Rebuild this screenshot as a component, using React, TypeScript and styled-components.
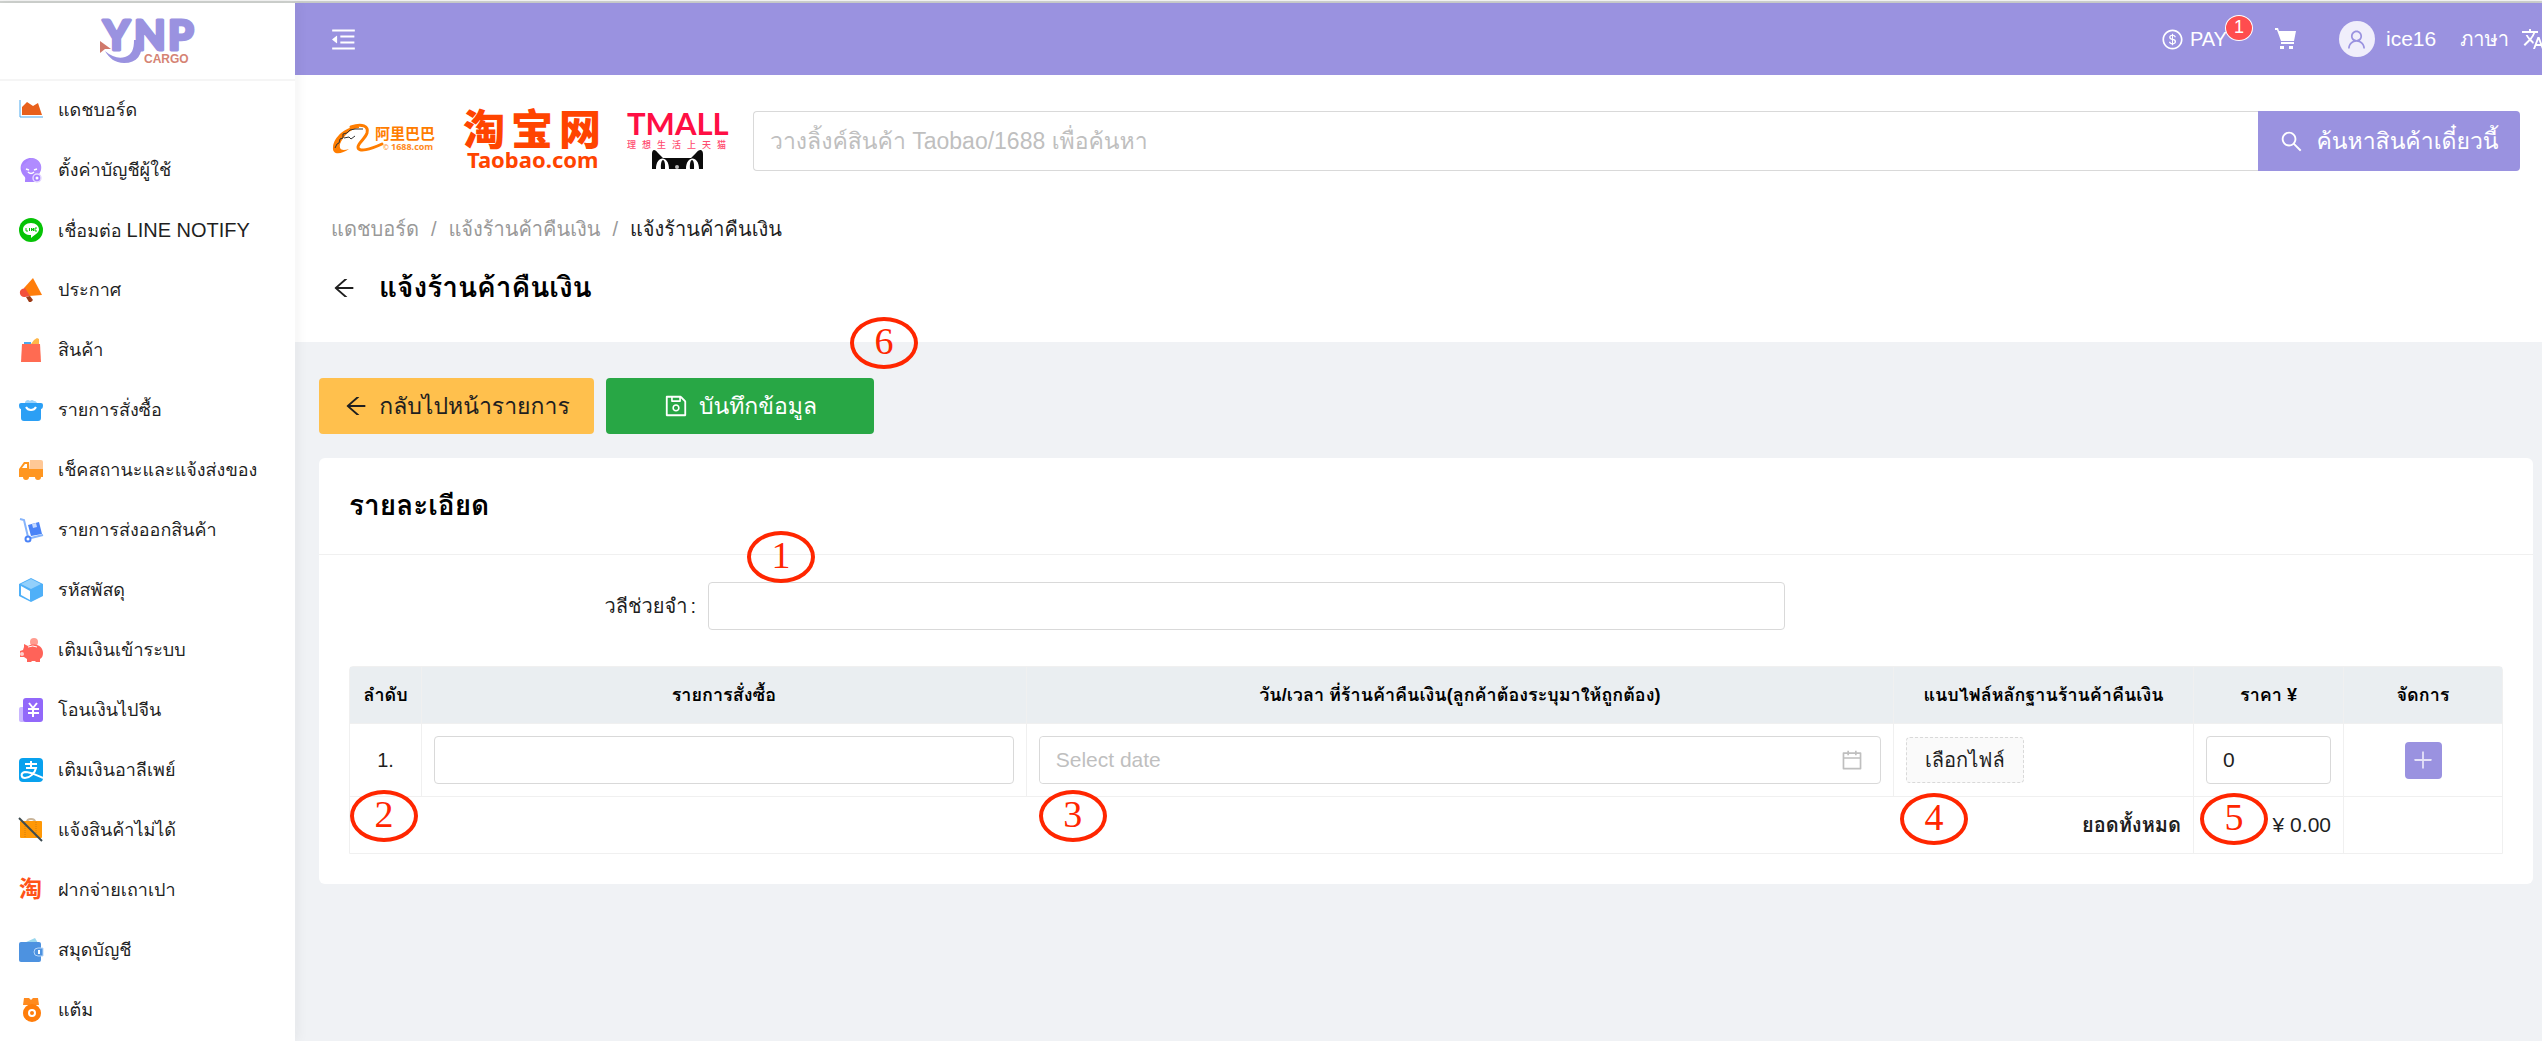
import React from "react";
import styled, { createGlobalStyle, css } from "styled-components";
import {
  AiOutlineArrowLeft,
  AiOutlineCalendar,
  AiOutlineDollarCircle,
  AiOutlineMenuFold,
  AiOutlinePlus,
  AiOutlineSave,
  AiOutlineSearch,
  AiOutlineUser,
} from "react-icons/ai";
import { MdTranslate } from "react-icons/md";

const purple = "#9a92e0";
const line = "#f0f0f0";
const fieldLine = "#d9d9d9";
const ink = "#1f1f1f";
const sans = '"Liberation Sans", "Loma", "Noto Sans Thai", sans-serif';

const GlobalStyle = createGlobalStyle`
  *, *::before, *::after { box-sizing: border-box; }
  body {
    margin: 0;
    background: #f0f2f5;
    color: ${ink};
    font-family: ${sans};
    font-size: 20px;
    line-height: 32px;
  }
  button, input { font: inherit; color: inherit; }
  a { color: inherit; text-decoration: none; }
  h1, h2, ol, ul { margin: 0; padding: 0; list-style: none; }
`;

/* ---------- shell ---------- */

const Page = styled.div`
  display: flex;
  flex-direction: column;
  min-height: 100vh;
  overflow: hidden;
`;

const TopEdge = styled.div`
  flex: none;
  height: 3px;
  background: #cfd2cf;
  border-top: 1px solid #f4f4f4;
`;

const Shell = styled.div`
  display: flex;
  flex: 1;
`;

const Sidebar = styled.aside`
  flex: none;
  width: 295px;
  background: #fff;
  box-shadow: 2px 0 12px rgba(29, 35, 41, 0.06);
  z-index: 1;
`;

const Brand = styled.a`
  display: flex;
  justify-content: center;
  align-items: center;
  height: 78px;
  border-bottom: 2px solid #f5f5f5;

  svg { overflow: visible; }
`;

const MenuLink = styled.a`
  display: flex;
  align-items: center;
  gap: 15px;
  height: 60px;
  padding: 0 19px 2px;
  font-size: 18px;
  white-space: nowrap;

  svg { flex: none; overflow: visible; }
`;

const Latin = styled.span`
  font-size: 20px;
`;

const Main = styled.div`
  flex: 1;
  min-width: 0;
`;

/* ---------- header ---------- */

const TopBar = styled.header`
  display: flex;
  justify-content: space-between;
  align-items: center;
  height: 72px;
  padding-left: 34px;
  background: ${purple};
  color: #fff;
  box-shadow: 0 1px 6px rgba(0, 21, 41, 0.12);
`;

const BarButton = styled.button`
  display: flex;
  padding: 0;
  border: 0;
  background: none;
  color: #fff;
`;

const BarGroup = styled.div`
  display: flex;
  align-items: center;
`;

const PayLink = styled.a`
  display: flex;
  align-items: center;
  gap: 6px;
  position: relative;
  margin-right: 48px;
`;

const PayCount = styled.span`
  position: absolute;
  left: 64px;
  top: -8px;
  width: 28px;
  height: 26px;
  border: 1px solid #fff;
  border-radius: 50%;
  background: #ff4d4f;
  font-size: 18px;
  line-height: 23px;
  text-align: center;
`;

const Avatar = styled.span`
  display: flex;
  justify-content: center;
  align-items: center;
  width: 36px;
  height: 36px;
  border-radius: 50%;
  background: #f0eefb;
  color: ${purple};
`;

const UserLink = styled.a`
  display: flex;
  align-items: center;
  gap: 11px;
  margin: 0 24px 0 42px;
  font-size: 21px;
`;

const LanguageButton = styled(BarButton)`
  align-items: center;
  gap: 12px;
`;

const IconClip = styled.span`
  display: flex;
  width: 21px;
  overflow: hidden;

  svg { flex: none; }
`;

/* ---------- page heading ---------- */

const Intro = styled.div`
  padding: 36px 22px 30px 36px;
  background: #fff;
`;

const SearchRow = styled.form`
  display: flex;
  align-items: center;
`;

const Shops = styled.div`
  display: flex;
  align-items: center;
  gap: 26px;
  margin-right: 24px;

  svg { display: block; overflow: visible; }
`;

const SearchInput = styled.input`
  flex: 1;
  min-width: 0;
  height: 60px;
  padding: 0 16px;
  border: 1px solid ${fieldLine};
  border-right: 0;
  border-radius: 4px 0 0 4px;
  outline: 0;
  background: #fff;
  font-size: 23px;

  &::placeholder { color: #bfbfbf; opacity: 1; }
`;

const SearchButton = styled.button`
  display: flex;
  justify-content: center;
  align-items: center;
  gap: 12px;
  width: 262px;
  height: 60px;
  padding: 0;
  border: 0;
  border-radius: 0 4px 4px 0;
  background: ${purple};
  color: #fff;
  font-size: 23px;
`;

const Crumbs = styled.ol`
  display: flex;
  margin-top: 42px;
  color: #999;
`;

const Crumb = styled.li`
  &:last-child { color: ${ink}; }

  & + &::before {
    content: "/";
    padding: 0 12px;
    color: #999;
  }
`;

const TitleRow = styled.div`
  display: flex;
  align-items: center;
  gap: 22px;
  height: 48px;
  margin-top: 19px;
`;

const PlainButton = styled.button`
  display: flex;
  padding: 0;
  border: 0;
  background: none;
`;

const PageTitle = styled.h1`
  color: #000;
  font-size: 28px;
  line-height: 48px;
`;

/* ---------- body ---------- */

const Content = styled.main`
  padding: 36px 9px 24px 24px;
`;

const Actions = styled.div`
  position: relative;
  display: flex;
  gap: 12px;
`;

const ActionButton = styled.button<{ $tone: "amber" | "green" }>`
  display: flex;
  justify-content: center;
  align-items: center;
  gap: 10px;
  height: 56px;
  border: 0;
  border-radius: 4px;
  font-size: 23px;

  ${({ $tone }) =>
    $tone === "amber"
      ? css`
          width: 275px;
          background: #ffc04d;
        `
      : css`
          width: 268px;
          background: #28a745;
          color: #fff;
        `}
`;

const Card = styled.section`
  margin-top: 24px;
  border-radius: 6px;
  background: #fff;
`;

const CardTitle = styled.h2`
  height: 97px;
  padding: 0 30px;
  border-bottom: 1px solid ${line};
  color: #000;
  font-size: 28px;
  line-height: 96px;
`;

const CardBody = styled.div`
  padding: 27px 30px 30px;
`;

const FieldRow = styled.div`
  position: relative;
  display: grid;
  grid-template-columns: 4fr 12fr 8fr;
  align-items: center;
`;

const FieldLabel = styled.label`
  padding-right: 12px;
  text-align: right;

  &::after {
    content: ":";
    margin-left: 3px;
  }
`;

const TextInput = styled.input`
  display: block;
  width: 100%;
  height: 48px;
  padding: 0 16px;
  border: 1px solid ${fieldLine};
  border-radius: 4px;
  outline: 0;
  background: #fff;
  font-size: 21px;

  &::placeholder { color: #bfbfbf; opacity: 1; }
`;

const DateField = styled.div`
  display: flex;
  align-items: center;
  height: 48px;
  padding-right: 16px;
  border: 1px solid ${fieldLine};
  border-radius: 4px;
  color: #bfbfbf;

  ${TextInput} { height: 46px; border: 0; }
  svg { flex: none; }
`;

const Table = styled.table`
  width: 100%;
  margin-top: 36px;
  border: 1px solid ${line};
  border-radius: 4px 4px 0 0;
  border-collapse: separate;
  border-spacing: 0;
  table-layout: fixed;
`;

const HeadCell = styled.th`
  height: 56px;
  padding: 0;
  background: #eaeef1;
  color: #000;
  font-size: 18px;
  white-space: nowrap;

  & + & { border-left: 1px solid ${line}; }
`;

const Cell = styled.td<{ $align?: "left" | "center" | "right"; $short?: boolean }>`
  position: relative;
  height: ${({ $short }) => ($short ? 57 : 73)}px;
  padding: 0 12px;
  border-top: 1px solid ${line};
  text-align: ${({ $align = "left" }) => $align};
  vertical-align: middle;

  & + & { border-left: 1px solid ${line}; }
`;

const Amount = styled.span`
  font-size: 21px;
`;

const FileButton = styled.button`
  height: 46px;
  padding: 0 18px;
  border: 1px dashed ${fieldLine};
  border-radius: 4px;
  background: #fafafa;
`;

const AddButton = styled.button`
  display: inline-flex;
  justify-content: center;
  align-items: center;
  width: 37px;
  height: 37px;
  padding: 0;
  border: 0;
  border-radius: 4px;
  background: ${purple};
  color: #e6e3f8;
  vertical-align: middle;
`;

/* Numbered callout that lies over the form. */
const Marker = styled.span<{ $left: string; $top: string }>`
  position: absolute;
  left: ${({ $left }) => $left};
  top: ${({ $top }) => $top};
  z-index: 1;
  width: 68px;
  height: 52px;
  border: 4px solid #ff2600;
  border-radius: 50%;
  color: #ff2600;
  font-family: "Liberation Serif", serif;
  font-size: 38px;
  line-height: 40px;
  text-align: center;
`;

/* ---------- drawings ---------- */

const cjk = '"Noto Sans CJK SC", sans-serif';

const YnpLogo = () => (
  <svg width="98" height="50" viewBox="0 0 98 50" role="img" aria-label="YNP Cargo">
    <g fill={purple} stroke={purple} strokeWidth="3" strokeLinejoin="round" fontFamily="Lato, sans-serif" fontWeight="900" fontSize="41">
      <text x="4" y="34">Y</text>
      <text x="35" y="34">N</text>
      <text x="69" y="34">P</text>
    </g>
    <path d="M43 24c1 15-5 23-18 23-9 0-15-5-19-12 7 6 14 8 20 6 7-2 9-8 9-17z" fill={purple} />
    <path d="M10 36c9 6 19 4 23-5" fill="none" stroke="#fff" strokeWidth="1" />
    <path d="M1 25l11 8-6 0-5 4z" fill="#d0796b" />
    <text x="45" y="47" fill="#d58373" fontFamily='"Liberation Sans", sans-serif' fontWeight="700" fontSize="12">CARGO</text>
  </svg>
);

const AlibabaLogo = () => (
  <svg width="104" height="34" viewBox="0 0 104 34" role="img" aria-label="阿里巴巴 1688.com">
    <path d="M28 3C17 1 3 12 2 23c-1 9 9 7 16 2-7 2-10 1-9-5C12 13 18 5 28 4z" fill="#ff7d00" />
    <path d="M20 3c11-4 18-1 16 6-2 6-9 10-9 14 0 6 13 2 24-3" fill="none" stroke="#ff7d00" strokeWidth="3" strokeLinecap="round" />
    <path d="M4 24l2-4 2-1 1-4 3-1 0-4 4-1 3-3 5-1 8 0" fill="none" stroke="#333" strokeWidth="1" />
    <path d="M13 14l5-1 2 2 4-3" fill="none" stroke="#333" strokeWidth="1" />
    <text x="44" y="15" fill="#ff7d00" fontFamily={cjk} fontWeight="700" fontSize="15">阿里巴巴</text>
    <text x="52" y="26" fill="#ff9630" fontFamily='"Open Sans", sans-serif' fontWeight="700" fontSize="7">©</text>
    <text x="60" y="26" fill="#ff8a1c" fontFamily='"Open Sans", sans-serif' fontWeight="700" fontSize="9">1688.com</text>
  </svg>
);

const TaobaoLogo = () => (
  <svg width="140" height="60" viewBox="0 0 140 60" role="img" aria-label="淘宝网 Taobao.com">
    <g fill="#ff4400">
      <text x="2" y="34" fontFamily={cjk} fontWeight="900" fontSize="42">淘</text>
      <text x="50" y="34" fontFamily={cjk} fontWeight="900" fontSize="42">宝</text>
      <text x="98" y="34" fontFamily={cjk} fontWeight="900" fontSize="42">网</text>
      <text x="6" y="57" fontFamily='"Noto Sans", sans-serif' fontWeight="700" fontSize="22">Taobao.com</text>
    </g>
  </svg>
);

const TmallLogo = () => (
  <svg width="102" height="60" viewBox="0 0 102 60" role="img" aria-label="TMALL 理想生活上天猫">
    <text x="0" y="24" fill="#ff0f44" fontFamily="Lato, sans-serif" fontWeight="700" fontSize="31">TMALL</text>
    <g fill="#ff4a70" fontFamily={cjk} fontSize="9" fontWeight="500">
      {["理", "想", "生", "活", "上", "天", "猫"].map((c, i) => (
        <text key={c} x={i * 15} y="37">{c}</text>
      ))}
    </g>
    <path d="M25 58V43c0-5 3-5 6-1l5 5h28l5-5c3-4 7-4 7 1v15z" fill="#0b0b0b" />
    <path d="M29 58c0-14 13-14 13 0zM59 58c0-14 13-14 13 0z" fill="#fff" />
    <path d="M34 58c-1-12 5-12 4 0zM63 58c-1-12 5-12 4 0z" fill="#0b0b0b" />
    <circle cx="50" cy="56" r="2" fill="#bbb" />
  </svg>
);

const CartIcon = () => (
  <svg width="22" height="22" viewBox="0 0 22 22" fill="#fff" aria-hidden="true">
    <path d="M0 0h3l1 3h17l-2 10H6L2 2H0zM6 14h13v2H6zM5 18h4v3H5zM14 18h4v3h-4z" />
  </svg>
);

const glyphs: Record<string, React.ReactNode> = {
  chart: (
    <>
      <path d="M1 2v17h23" fill="none" stroke="#4aa8ee" strokeWidth="1" />
      <path d="M3 17V9l5-5 6 4 5-3 4 12z" fill="#e8601c" />
    </>
  ),
  user: (
    <>
      <path d="M6 24c0-3 1-4-1-6C-2 10 3 0 12 0s14 10 7 17c-2 2-2 4-1 7z" fill="#a982ff" />
      <path d="M2 9L12 0c8 0 13 8 8 16L8 15z" fill="#b793ff" opacity=".5" />
      <path d="M7 11l3 1m5 0l3-1M9 14q3 3 6 0" stroke="#fff" strokeWidth="1.5" fill="none" />
      <circle cx="18" cy="20" r="4" fill="#a982ff" stroke="#e5d9ff" strokeWidth="1.5" />
      <circle cx="18" cy="20" r="1.5" fill="#fff" />
    </>
  ),
  chat: (
    <>
      <circle cx="12" cy="12" r="12" fill="#06c306" />
      <path d="M12 5c5 0 8 3 8 6.500S14 18 12 20v-3c-5 0-8-2-8-5.500S7 5 12 5z" fill="#fff" />
      <path d="M7 10v3h2M10.500 10v3M12.500 13v-3l2 3v-3M18 10h-2v3h2" stroke="#06c306" strokeWidth="1" fill="none" />
    </>
  ),
  horn: (
    <>
      <path d="M14 0l9 17-13 1-5-8z" fill="#ff7d0a" />
      <path d="M6 10l5 8-5 1c-5 1-7-6-3-8z" fill="#f2503b" />
      <path d="M7 19l4-1 3 4-2 2-2 0z" fill="#9c3b17" />
    </>
  ),
  bag: (
    <>
      <path d="M5 6V4h7v3z" fill="#4aa8ee" />
      <path d="M12 6l3-4 3-2 2 1v6z" fill="#ffb648" />
      <path d="M3 6h18l1 18H2z" fill="#ff6b52" />
    </>
  ),
  box: (
    <>
      <path d="M6 6a3 3 0 015-3 3 3 0 014 0 3 3 0 013 4z" fill="#9cd3fb" />
      <path d="M2 5h20a2 2 0 012 2c0 3-1 4-2 4v9c0 2-1 3-3 3H5c-2 0-3-1-3-3v-9C1 11 0 10 0 7a2 2 0 012-2z" fill="#2b9ff5" />
      <path d="M7 9c2 4 8 4 10 0" stroke="#fff" strokeWidth="2" fill="none" />
    </>
  ),
  truck: (
    <>
      <path d="M11 2h11a2 2 0 012 2v8H10z" fill="#ffc896" />
      <path d="M10 4H5L0 11v8h4a3 3 0 006 0h6a3 3 0 006 0h2v-8H10z" fill="#ff9620" />
      <path d="M8 6v4H3l3-4z" fill="#fff" />
    </>
  ),
  trolley: (
    <>
      <path d="M1 1l4 1 4 17" stroke="#86b4fb" strokeWidth="2" fill="none" />
      <path d="M9 7l11-3 3 12-11 2z" fill="#4a83f7" />
      <path d="M13 6l4-1 1 4-4 1z" fill="#c5d9ff" />
      <path d="M12 20l12-3" stroke="#86b4fb" strokeWidth="2" />
      <circle cx="9" cy="21" r="2.500" fill="#fff" stroke="#4a83f7" strokeWidth="2" />
    </>
  ),
  cube: (
    <>
      <path d="M12 0l12 6v12l-12 6L0 18V6z" fill="#4fb0f8" />
      <path d="M12 1l10 5-10 5L2 6z" fill="#93d0fb" />
      <path d="M2 8l9 5v9l-9-5z" fill="#fff" />
    </>
  ),
  piggy: (
    <>
      <circle cx="15" cy="4" r="4" fill="#ff9c90" />
      <path d="M5 6l4 2c9-4 15 1 15 7 0 3-1 5-3 6v3h-4l-1-1h-3l-1 1H8v-3l-3-2H1v-6l3-1 1-3z" fill="#ff6359" />
      <path d="M9 9q5-2 9 0" stroke="#fff" strokeWidth="1" fill="none" />
      <circle cx="3" cy="16" r="2" fill="#fff" opacity=".7" />
    </>
  ),
  yuan: (
    <>
      <rect x="0" y="9" width="10" height="15" rx="2" fill="#c9b6ff" />
      <rect x="4" y="0" width="20" height="24" rx="3" fill="#9268fa" />
      <path d="M10 5l4 5 4-5M14 10v9M9 11h11M9 15h11" stroke="#fff" strokeWidth="2" fill="none" />
    </>
  ),
  alipay: (
    <>
      <rect width="24" height="24" rx="4" fill="#08a1ee" />
      <path d="M6 6h12M12 3v7M7 10h10c-1 5-6 10-11 10-4 0-5-5 0-6 6 0 11 3 18 6" stroke="#fff" strokeWidth="2" fill="none" />
    </>
  ),
  suitcase: (
    <>
      <path d="M8 4q0-3 4-3t4 3" stroke="#c9b59a" strokeWidth="2" fill="none" />
      <rect x="1" y="3" width="22" height="17" rx="1" fill="#ff9806" />
      <path d="M6 4v15M17 4v15" stroke="#d07f12" strokeWidth="1" strokeDasharray="1 1" />
      <path d="M0 0l23 23" stroke="#3c4a50" strokeWidth="2" />
    </>
  ),
  taobao: (
    <text x="0" y="19" fill="#ff5318" fontFamily={cjk} fontWeight="700" fontSize="23">淘</text>
  ),
  wallet: (
    <>
      <path d="M5 5l11-5 3 5z" fill="#9bd7ee" />
      <rect x="0" y="4" width="22" height="20" rx="2" fill="#4d92e0" />
      <path d="M24 10h-5a4 4 0 000 8h5z" fill="#4d92e0" stroke="#b7d6f7" strokeWidth="1" />
      <path d="M20 12v4" stroke="#fff" strokeWidth="2" />
    </>
  ),
  medal: (
    <>
      <path d="M5 0h5l2 2 2-2h5l1 7H4z" fill="#ff8a1e" />
      <circle cx="13" cy="15" r="9" fill="#ff7d0a" />
      <circle cx="13" cy="15" r="3" fill="none" stroke="#fff" strokeWidth="2" />
    </>
  ),
};

const menu: Array<[string, React.ReactNode]> = [
  ["chart", "แดชบอร์ด"],
  ["user", "ตั้งค่าบัญชีผู้ใช้"],
  ["chat", <>เชื่อมต่อ <Latin>LINE NOTIFY</Latin></>],
  ["horn", "ประกาศ"],
  ["bag", "สินค้า"],
  ["box", "รายการสั่งซื้อ"],
  ["truck", "เช็คสถานะและแจ้งส่งของ"],
  ["trolley", "รายการส่งออกสินค้า"],
  ["cube", "รหัสพัสดุ"],
  ["piggy", "เติมเงินเข้าระบบ"],
  ["yuan", "โอนเงินไปจีน"],
  ["alipay", "เติมเงินอาลีเพย์"],
  ["suitcase", "แจ้งสินค้าไม่ได้"],
  ["taobao", "ฝากจ่ายเถาเปา"],
  ["wallet", "สมุดบัญชี"],
  ["medal", "แต้ม"],
];

export default function App() {
  return (
    <Page>
      <GlobalStyle />
      <TopEdge />
      <Shell>
        <Sidebar>
          <Brand href="#"><YnpLogo /></Brand>
          <nav>
            <ul>
              {menu.map(([icon, label]) => (
                <li key={icon}>
                  <MenuLink href="#">
                    <svg width="24" height="24" viewBox="0 0 24 24" aria-hidden="true">{glyphs[icon]}</svg>
                    <span>{label}</span>
                  </MenuLink>
                </li>
              ))}
            </ul>
          </nav>
        </Sidebar>
        <Main>
          <TopBar>
            <BarButton type="button" aria-label="ย่อเมนู"><AiOutlineMenuFold size={29} /></BarButton>
            <BarGroup>
              <PayLink href="#">
                <AiOutlineDollarCircle size={23} />
                PAY
                <PayCount>1</PayCount>
              </PayLink>
              <BarButton type="button" aria-label="ตะกร้า"><CartIcon /></BarButton>
              <UserLink href="#">
                <Avatar><AiOutlineUser size={23} /></Avatar>
                ice16
              </UserLink>
              <LanguageButton type="button">
                ภาษา
                <IconClip><MdTranslate size={24} /></IconClip>
              </LanguageButton>
            </BarGroup>
          </TopBar>
          <Intro>
            <SearchRow onSubmit={(e) => e.preventDefault()}>
              <Shops>
                <AlibabaLogo />
                <TaobaoLogo />
                <TmallLogo />
              </Shops>
              <SearchInput aria-label="ค้นหาสินค้า" placeholder="วางลิ้งค์สินค้า Taobao/1688 เพื่อค้นหา" />
              <SearchButton type="submit"><AiOutlineSearch size={25} />ค้นหาสินค้าเดี๋ยวนี้</SearchButton>
            </SearchRow>
            <Crumbs>
              <Crumb><a href="#">แดชบอร์ด</a></Crumb>
              <Crumb><a href="#">แจ้งร้านค้าคืนเงิน</a></Crumb>
              <Crumb>แจ้งร้านค้าคืนเงิน</Crumb>
            </Crumbs>
            <TitleRow>
              <PlainButton type="button" aria-label="กลับ"><AiOutlineArrowLeft size={26} /></PlainButton>
              <PageTitle>แจ้งร้านค้าคืนเงิน</PageTitle>
            </TitleRow>
          </Intro>
          <Content>
            <Actions>
              <ActionButton type="button" $tone="amber"><AiOutlineArrowLeft size={26} />กลับไปหน้ารายการ</ActionButton>
              <ActionButton type="button" $tone="green"><AiOutlineSave size={26} />บันทึกข้อมูล</ActionButton>
              <Marker $left="531px" $top="-61px">6</Marker>
            </Actions>
            <Card>
              <CardTitle>รายละเอียด</CardTitle>
              <CardBody>
                <FieldRow>
                  <FieldLabel htmlFor="memo">วลีช่วยจำ</FieldLabel>
                  <TextInput id="memo" />
                  <Marker $left="398px" $top="-51px">1</Marker>
                </FieldRow>
                <Table>
                  <colgroup>
                    <col style={{ width: 71 }} />
                    <col style={{ width: "28.1%" }} />
                    <col />
                    <col style={{ width: 300 }} />
                    <col style={{ width: 150 }} />
                    <col style={{ width: 159 }} />
                  </colgroup>
                  <thead>
                    <tr>
                      <HeadCell>ลำดับ</HeadCell>
                      <HeadCell>รายการสั่งซื้อ</HeadCell>
                      <HeadCell>วัน/เวลา ที่ร้านค้าคืนเงิน(ลูกค้าต้องระบุมาให้ถูกต้อง)</HeadCell>
                      <HeadCell>แนบไฟล์หลักฐานร้านค้าคืนเงิน</HeadCell>
                      <HeadCell>ราคา ¥</HeadCell>
                      <HeadCell>จัดการ</HeadCell>
                    </tr>
                  </thead>
                  <tbody>
                    <tr>
                      <Cell $align="center">
                        1.
                        <Marker $left="0" $top="66px">2</Marker>
                      </Cell>
                      <Cell><TextInput aria-label="รายการสั่งซื้อ" /></Cell>
                      <Cell>
                        <DateField>
                          <TextInput aria-label="วัน/เวลา" placeholder="Select date" />
                          <AiOutlineCalendar size={24} />
                        </DateField>
                        <Marker $left="12px" $top="66px">3</Marker>
                      </Cell>
                      <Cell>
                        <FileButton type="button">เลือกไฟล์</FileButton>
                        <Marker $left="6px" $top="69px">4</Marker>
                      </Cell>
                      <Cell>
                        <TextInput aria-label="ราคา ¥" defaultValue="0" />
                        <Marker $left="6px" $top="69px">5</Marker>
                      </Cell>
                      <Cell $align="center">
                        <AddButton type="button" aria-label="เพิ่ม"><AiOutlinePlus size={24} /></AddButton>
                      </Cell>
                    </tr>
                    <tr>
                      <Cell colSpan={4} $short $align="right"><b>ยอดทั้งหมด</b></Cell>
                      <Cell $short $align="right"><Amount>¥ 0.00</Amount></Cell>
                      <Cell $short />
                    </tr>
                  </tbody>
                </Table>
              </CardBody>
            </Card>
          </Content>
        </Main>
      </Shell>
    </Page>
  );
}
